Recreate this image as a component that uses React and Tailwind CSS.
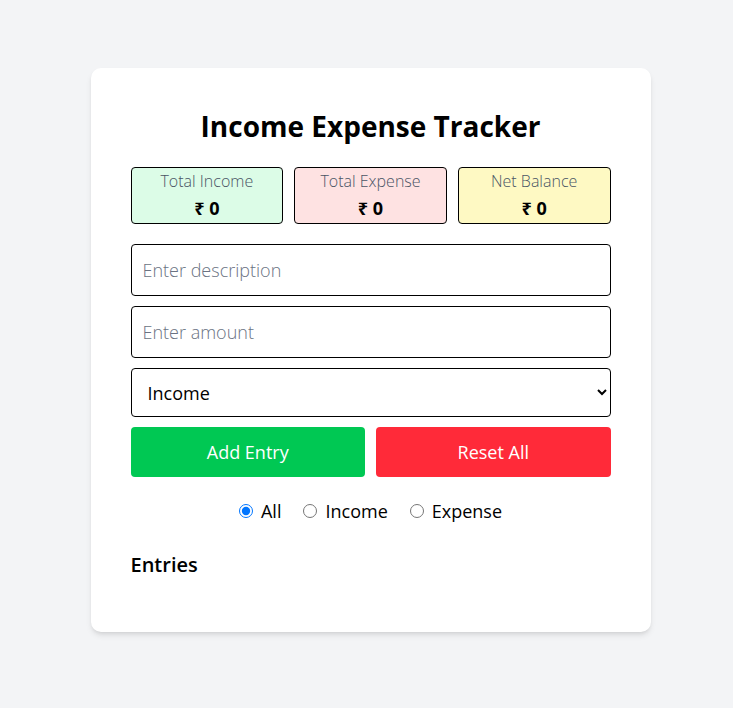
import React, { useState } from 'react';

const App = () => {
    const [description, setDescription] = useState('');
    const [amount, setAmount] = useState('');
    const [type, setType] = useState('income');
    const [filter, setFilter] = useState('all');

    const font = { fontFamily: '"Open Sans", "Noto Sans", sans-serif' };

    return (
        <div className="min-h-screen bg-[#f3f4f6] flex justify-center pl-2 pt-[68px]" style={font}>
            <div className="w-[560px] h-[564px] bg-white rounded-[10px] shadow-md px-10 pt-10">
                {/* Title */}
                <h1 className="text-[28px] leading-9 font-bold text-black text-center mb-[23px]">
                    Income Expense Tracker
                </h1>

                {/* Summary */}
                <div className="grid grid-cols-3 gap-[11px] mb-5">
                    <div className="h-[57px] bg-[#dcfce7] border border-black rounded-[4px] flex flex-col items-center pt-[1px]">
                        <p className="text-base leading-6 font-light text-gray-600">Total Income</p>
                        <p className="text-lg leading-[30px] font-bold text-black">₹ 0</p>
                    </div>
                    <div className="h-[57px] bg-[#fee2e2] border border-black rounded-[4px] flex flex-col items-center pt-[1px]">
                        <p className="text-base leading-6 font-light text-gray-600">Total Expense</p>
                        <p className="text-lg leading-[30px] font-bold text-black">₹ 0</p>
                    </div>
                    <div className="h-[57px] bg-[#fef9c3] border border-black rounded-[4px] flex flex-col items-center pt-[1px]">
                        <p className="text-base leading-6 font-light text-gray-600">Net Balance</p>
                        <p className="text-lg leading-[30px] font-bold text-black">₹ 0</p>
                    </div>
                </div>

                {/* Form */}
                <div className="flex flex-col gap-[10px]">
                    <input
                        type="text"
                        value={description}
                        onChange={(e) => setDescription(e.target.value)}
                        placeholder="Enter description"
                        className="w-full h-[52px] px-[11px] border border-black rounded-[4px] text-lg font-light text-black placeholder:text-gray-500 focus:outline-none"
                    />
                    <input
                        type="number"
                        value={amount}
                        onChange={(e) => setAmount(e.target.value)}
                        placeholder="Enter amount"
                        className="w-full h-[52px] px-[11px] border border-black rounded-[4px] text-lg font-light text-black placeholder:text-gray-500 focus:outline-none"
                    />
                    <select
                        value={type}
                        onChange={(e) => setType(e.target.value)}
                        className="w-full h-[49px] pl-[12px] pr-2 border border-black rounded-[4px] text-lg text-black bg-white focus:outline-none"
                    >
                        <option value="income">Income</option>
                        <option value="expense">Expense</option>
                    </select>
                    <div className="grid grid-cols-2 gap-[11px]">
                        <button className="h-[50px] bg-[#00c853] text-white text-lg rounded-[4px]">
                            Add Entry
                        </button>
                        <button className="h-[50px] bg-[#ff2a39] text-white text-lg rounded-[4px]">
                            Reset All
                        </button>
                    </div>
                </div>

                {/* Filter */}
                <div className="flex justify-center items-center gap-[22px] mt-5 text-lg text-black">
                    <label className="flex items-center gap-2">
                        <input type="radio" name="filter" checked={filter === 'all'} onChange={() => setFilter('all')} className="w-[14px] h-[14px]" />
                        All
                    </label>
                    <label className="flex items-center gap-2">
                        <input type="radio" name="filter" checked={filter === 'income'} onChange={() => setFilter('income')} className="w-[14px] h-[14px]" />
                        Income
                    </label>
                    <label className="flex items-center gap-2">
                        <input type="radio" name="filter" checked={filter === 'expense'} onChange={() => setFilter('expense')} className="w-[14px] h-[14px]" />
                        Expense
                    </label>
                </div>

                {/* Entries */}
                <h2 className="text-xl font-semibold text-black mt-[26px]">Entries</h2>
            </div>
        </div>
    );
};

export default App;
